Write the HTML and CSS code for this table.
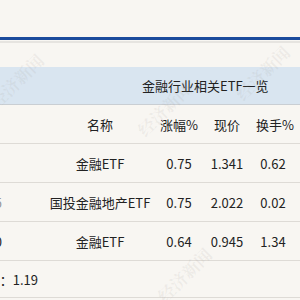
FILE: index.html
```html
<!DOCTYPE html>
<html lang="zh">
<head>
<meta charset="utf-8">
<link rel="stylesheet" href="styles.css">
</head>
<body>
<div class="page">
  <div class="topbar"></div>
  <div class="rule"></div>
  <div class="spacer"></div>
  <div class="title">金融行业相关ETF一览</div>
  <div class="table">
    <div class="row head">
      <div class="cell code"></div>
      <div class="cell">名称</div>
      <div class="cell">涨幅%</div>
      <div class="cell">现价</div>
      <div class="cell">换手%</div>
      <div class="cell"></div>
    </div>
    <div class="row">
      <div class="cell code"><span></span></div>
      <div class="cell">金融ETF</div>
      <div class="cell">0.75</div>
      <div class="cell">1.341</div>
      <div class="cell">0.62</div>
      <div class="cell"></div>
    </div>
    <div class="row">
      <div class="cell code"><span class="faint">5</span></div>
      <div class="cell">国投金融地产ETF</div>
      <div class="cell">0.75</div>
      <div class="cell">2.022</div>
      <div class="cell">0.02</div>
      <div class="cell"></div>
    </div>
    <div class="row">
      <div class="cell code"><span>0</span></div>
      <div class="cell">金融ETF</div>
      <div class="cell">0.64</div>
      <div class="cell">0.945</div>
      <div class="cell">1.34</div>
      <div class="cell"></div>
    </div>
    <div class="row foot">
      <div class="avg"><span>平均溢价率：1.19</span></div>
    </div>
  </div>
  <span class="wm wm1">经济新闻</span>
  <span class="wm wm2">经济新闻</span>
  <span class="wm wm3">经济新闻</span>
  <span class="wm wm4">经济新闻</span>
</div>
</body>
</html>
```
FILE: styles.css
```css
html, body {
  margin: 0;
  padding: 0;
  width: 300px;
  height: 300px;
  overflow: hidden;
  background: #f8f6f2;
}
.page {
  position: relative;
  width: 300px;
  height: 300px;
  overflow: hidden;
  font-family: "Noto Sans CJK SC", "Noto Sans", sans-serif;
  font-size: 13px;
  color: #222;
}
.topbar {
  height: 37px;
}
.rule {
  height: 3px;
  background: #1b4b9c;
  border-bottom: 1px solid #f8f6f2;
  box-shadow: 0 2px 0 #e6e4e0;
}
.spacer {
  height: 26px;
}
.title {
  height: 37px;
  background: #d9e5f0;
  display: flex;
  align-items: center;
  padding-left: 142px;
  border-bottom: 1px solid #c9ced3;
  line-height: 1;
}
.table {
  display: flex;
  flex-direction: column;
}
.row {
  display: grid;
  grid-template-columns: 40px 120px 38px 58px 34px 1fr;
  height: 38px;
  border-bottom: 1.5px solid #dedbd6;
  align-items: center;
}
.row.head {
  height: 38px;
}
.cell {
  text-align: center;
  white-space: nowrap;
  line-height: 1;
}
.code {
  display: flex;
  justify-content: flex-end;
  padding-right: 38px;
}
.faint {
  color: #999;
}
.foot {
  display: flex;
  height: 36px;
}
.avg {
  display: flex;
  justify-content: flex-end;
  width: 38px;
  white-space: nowrap;
  line-height: 1;
}
.wm {
  position: absolute;
  font-family: "Noto Serif CJK SC", "Noto Sans CJK SC", serif;
  font-weight: bold;
  font-size: 17px;
  color: rgba(160, 155, 150, 0.12);
  transform: rotate(-45deg);
  white-space: nowrap;
  pointer-events: none;
}
.wm1 { left: -18px; top: 68px; }
.wm2 { left: 228px; top: 60px; }
.wm3 { left: 130px; top: 96px; }
.wm4 { left: 150px; top: 262px; }
```
